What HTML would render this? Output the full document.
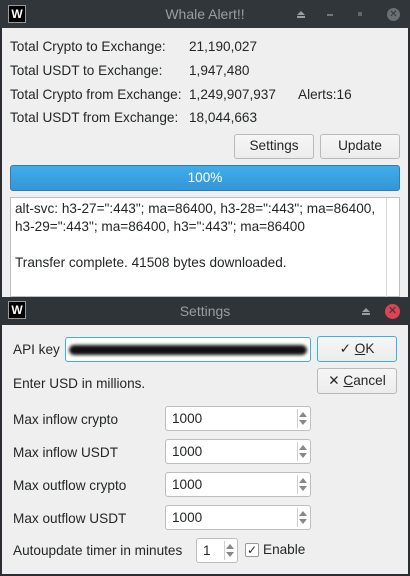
<!DOCTYPE html>
<html><head><style>
*{box-sizing:border-box;margin:0;padding:0}
body{width:410px;height:576px;overflow:hidden;background:#2a2e32;font-family:"Liberation Sans","DejaVu Sans",sans-serif;font-size:13.6px;color:#232627;position:relative}
.a{position:absolute}
.tb{background:#31363b;color:#9a9ea2;font-size:14px;text-align:center;line-height:28px}
.wi{width:18px;height:18px;background:#000;border:1px solid #999;color:#fff;font-weight:bold;font-size:12px;line-height:16px;text-align:center}
.bg{background:#efefef}
.t{white-space:nowrap;line-height:16px}
.btn{background:linear-gradient(#f6f6f6,#ececec);border:1px solid #b8b9ba;border-radius:3px;text-align:center;line-height:22px;font-size:13.6px}
.sp{background:#fff;border:1px solid #bcbebf;border-radius:3px;padding-left:6px;line-height:23px}
.sp:after{content:"";position:absolute;right:12px;top:2px;bottom:2px;border-left:1px solid #d0d0d0}
.ar{position:absolute;right:3px;width:0;height:0;border-left:4px solid transparent;border-right:4px solid transparent}
</style></head><body>
<div class="a tb" style="left:0;top:0;width:410px;height:28px">Whale Alert!!</div>
<div class="a wi" style="left:8px;top:5px">W</div>
<div class="a" style="left:297px;top:11px;width:0;height:0;border-left:4px solid transparent;border-right:4px solid transparent;border-bottom:4px solid #9a9ea2"></div>
<div class="a" style="left:297px;top:16px;width:8px;height:2px;background:#9a9ea2"></div>
<div class="a" style="left:327px;top:14px;width:6px;height:2px;background:#777"></div>
<div class="a" style="left:358px;top:12px;width:4px;height:4px;background:#666"></div>
<div class="a" style="left:387px;top:8px;width:13px;height:13px;border-radius:7px;background:#6b6f73;color:#31363b;font-size:10px;line-height:13px;text-align:center;font-weight:bold">✕</div>
<div class="a bg" style="left:2px;top:28px;width:406px;height:269px"></div>
<div class="a t" style="left:10px;top:39px">Total Crypto to Exchange:</div>
<div class="a t" style="left:189px;top:39px">21,190,027</div>
<div class="a t" style="left:10px;top:63px">Total USDT to Exchange:</div>
<div class="a t" style="left:189px;top:63px">1,947,480</div>
<div class="a t" style="left:10px;top:87px">Total Crypto from Exchange:</div>
<div class="a t" style="left:189px;top:87px">1,249,907,937</div>
<div class="a t" style="left:298px;top:87px">Alerts:16</div>
<div class="a t" style="left:10px;top:110px">Total USDT from Exchange:</div>
<div class="a t" style="left:189px;top:110px">18,044,663</div>
<div class="a btn" style="left:234px;top:134px;width:80px;height:25px">Settings</div>
<div class="a btn" style="left:320px;top:134px;width:80px;height:25px">Update</div>
<div class="a" style="left:10px;top:165px;width:390px;height:26px;background:linear-gradient(#40aeea,#3496d6);border:1px solid #2a7fb5;border-radius:3px;color:#fff;text-align:center;line-height:24px">100%</div>
<div class="a" style="left:10px;top:197px;width:390px;height:100px;background:#fff;border:1px solid #bcbebf"></div>
<div class="a" style="left:386px;top:198px;width:1px;height:99px;background:#d8d8d8"></div>
<div class="a t" style="left:15px;top:200px;line-height:18px">alt-svc: h3-27=":443"; ma=86400, h3-28=":443"; ma=86400,<br>h3-29=":443"; ma=86400, h3=":443"; ma=86400<br><br>Transfer complete. 41508 bytes downloaded.</div>

<div class="a tb" style="left:0;top:297px;width:410px;height:28px;background:#2f3439">Settings</div>
<div class="a wi" style="left:8px;top:301px">W</div>
<div class="a" style="left:362px;top:308px;width:0;height:0;border-left:4px solid transparent;border-right:4px solid transparent;border-bottom:4px solid #9a9ea2"></div>
<div class="a" style="left:362px;top:313px;width:8px;height:2px;background:#9a9ea2"></div>
<div class="a" style="left:385px;top:304px;width:15px;height:15px;border-radius:8px;background:#da4453;color:#31363b;font-size:11px;line-height:15px;text-align:center;font-weight:bold">✕</div>
<div class="a bg" style="left:2px;top:325px;width:406px;height:249px"></div>
<div class="a t" style="left:13px;top:342px">API key</div>
<div class="a" style="left:65px;top:337px;width:246px;height:25px;background:#fff;border:1px solid #3daee9;border-radius:3px;overflow:hidden"><div style="position:absolute;left:3px;top:7px;width:238px;height:10px;background:#111;border-radius:5px;filter:blur(1.5px)"></div></div>
<div class="a btn" style="left:317px;top:336px;width:80px;height:26px;border-color:#3daee9;line-height:24px">✓ <u>O</u>K</div>
<div class="a btn" style="left:317px;top:368px;width:80px;height:26px;line-height:24px">✕ <u>C</u>ancel</div>
<div class="a t" style="left:13px;top:376px">Enter USD in millions.</div>

<div class="a t" style="left:13px;top:412px">Max inflow crypto</div>
<div class="a sp" style="left:165px;top:406px;width:146px;height:25px">1000<div class="ar" style="top:5px;border-bottom:5px solid #888"></div><div class="ar" style="bottom:5px;border-top:5px solid #888"></div></div>
<div class="a t" style="left:13px;top:445px">Max inflow USDT</div>
<div class="a sp" style="left:165px;top:439px;width:146px;height:25px">1000<div class="ar" style="top:5px;border-bottom:5px solid #888"></div><div class="ar" style="bottom:5px;border-top:5px solid #888"></div></div>
<div class="a t" style="left:13px;top:478px">Max outflow crypto</div>
<div class="a sp" style="left:165px;top:472px;width:146px;height:25px">1000<div class="ar" style="top:5px;border-bottom:5px solid #888"></div><div class="ar" style="bottom:5px;border-top:5px solid #888"></div></div>
<div class="a t" style="left:13px;top:511px">Max outflow USDT</div>
<div class="a sp" style="left:165px;top:505px;width:146px;height:25px">1000<div class="ar" style="top:5px;border-bottom:5px solid #888"></div><div class="ar" style="bottom:5px;border-top:5px solid #888"></div></div>
<div class="a t" style="left:13px;top:543px">Autoupdate timer in minutes</div>
<div class="a sp" style="left:196px;top:538px;width:42px;height:25px">1<div class="ar" style="top:5px;border-bottom:5px solid #888"></div><div class="ar" style="bottom:5px;border-top:5px solid #888"></div></div>
<div class="a" style="left:245px;top:543px;width:14px;height:14px;background:#fff;border:1px solid #999;border-radius:2px;font-size:12px;line-height:12px;text-align:center;font-weight:bold">✓</div>
<div class="a t" style="left:263px;top:542px">Enable</div>
</body></html>
